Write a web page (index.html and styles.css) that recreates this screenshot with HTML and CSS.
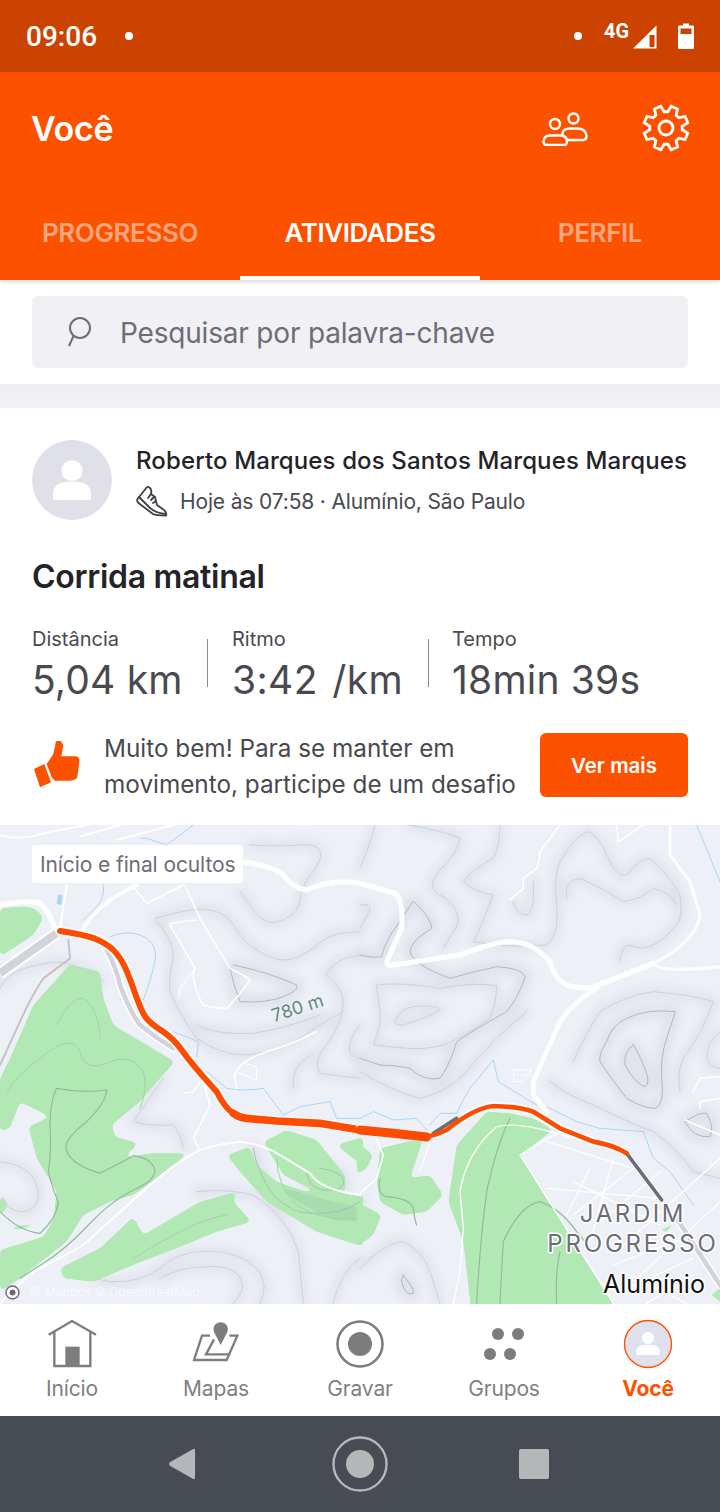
FILE: index.html
```html
<!DOCTYPE html>
<html lang="pt-BR">
<head>
    <meta charset="UTF-8">
    <meta name="viewport" content="width=device-width, initial-scale=1.0">
    <title>Você - Atividades</title>
    <link rel="stylesheet" href="styles.css">
</head>
<body>
    <div class="status-bar">
        <span class="status-time">09:06</span>
        <span class="status-dot status-dot-left"></span>
        <span class="status-dot status-dot-right"></span>
        <span class="status-net">4G</span>
        <svg class="status-signal" width="26" height="26" viewBox="0 0 26 26">
            <path d="M1 24.5 L24.5 1.5 V24.5 Z" fill="#fff"/>
            <path d="M17.5 11 H22.5 V23 H17.5 Z" fill="#cc4200"/>
        </svg>
        <svg class="status-battery" width="16" height="26" viewBox="0 0 16 26">
            <path d="M5 0.5 H11 V2.5 H14.5 Q16 2.5 16 4 V24.5 Q16 26 14.5 26 H1.5 Q0 26 0 24.5 V4 Q0 2.5 1.5 2.5 H5 Z" fill="#fff"/>
            <rect x="2.5" y="5.5" width="11" height="5.5" fill="#cc4200"/>
        </svg>
    </div>

    <header class="app-header">
        <div class="header-top">
            <h1>Você</h1>
            <svg class="icon-friends" width="46" height="34" viewBox="0 0 46 34" fill="none" stroke="#fff" stroke-width="2.4">
                <circle cx="13" cy="12" r="5"/>
                <circle cx="31.5" cy="6.5" r="5"/>
                <path d="M20.5 23 Q20 17 27 16.5 H36 Q44 17 44.5 24 Q44.5 28 41 28 H25"/>
                <path d="M7 23.5 H19 Q25 24 25 29.5 Q25 33 21 33 H5 Q1.5 33 1.5 29.5 Q2 24 7 23.5 Z"/>
            </svg>
            <svg class="icon-gear" width="48" height="48" viewBox="-24 -24 48 48" fill="none" stroke="#fff" stroke-width="2.8" stroke-linejoin="miter">
                <polygon points="16.2,1.8 21.8,5.2 19,11.5 12.8,10.2 10.2,12.8 11.5,19 5.2,21.8 1.8,16.2 -1.8,16.2 -5.2,21.8 -11.5,19 -10.2,12.8 -12.8,10.2 -19,11.5 -21.8,5.2 -16.2,1.8 -16.2,-1.8 -21.8,-5.2 -19,-11.5 -12.8,-10.2 -10.2,-12.8 -11.5,-19 -5.2,-21.8 -1.8,-16.2 1.8,-16.2 5.2,-21.8 11.5,-19 10.2,-12.8 12.8,-10.2 19,-11.5 21.8,-5.2 16.2,-1.8"/>
                <circle r="7"/>
            </svg>
        </div>
        <nav class="tabs">
            <a class="tab">PROGRESSO</a>
            <a class="tab tab-active">ATIVIDADES</a>
            <a class="tab">PERFIL</a>
        </nav>
    </header>

    <div class="search-wrap">
        <div class="search-box">
            <svg class="icon-search" width="28" height="34" viewBox="0 0 28 34" fill="none" stroke="#6d6d78" stroke-width="2">
                <circle cx="15" cy="12" r="10"/>
                <path d="M8.5 20 L4 30"/>
            </svg>
            <span>Pesquisar por palavra-chave</span>
        </div>
    </div>
    <div class="divider"></div>

    <section class="card">
        <div class="athlete">
            <div class="avatar">
                <svg width="80" height="80" viewBox="0 0 80 80" fill="#fff">
                    <circle cx="40" cy="30.7" r="10.5"/>
                    <path d="M21 60 V54 Q21 42.5 36 41.7 H44 Q59 42.5 59 54 V60 Z"/>
                </svg>
            </div>
            <div class="athlete-text">
                <div class="athlete-name">Roberto Marques dos Santos Marques Marques</div>
                <div class="athlete-sub">
                    <svg class="icon-shoe" width="32" height="32" viewBox="0 0 32 32" fill="none" stroke="#3f3f46" stroke-width="1.8" stroke-linejoin="round" stroke-linecap="round">
                        <path d="M11 2 L1.5 14 Q0.5 16 2.5 18 L17 29 Q20 30.5 30 30.5 Q31 27 28 25 L21 20 L19 12 L15 9 Q16 5 14 3 Q12 1.5 11 2 Z"/>
                        <path d="M3 12 L13 22 Q19 28 30 29"/>
                        <path d="M15 9 L12 13 M18 12 L15 15 M20 16 L17 18"/>
                    </svg>
                    <span>Hoje às 07:58 · Alumínio, São Paulo</span>
                </div>
            </div>
        </div>

        <h2 class="activity-title">Corrida matinal</h2>

        <div class="stats">
            <div class="stat stat-distance">
                <div class="stat-label">Distância</div>
                <div class="stat-value">5,04 km</div>
            </div>
            <div class="stat-sep"></div>
            <div class="stat stat-pace">
                <div class="stat-label">Ritmo</div>
                <div class="stat-value">3:42 /km</div>
            </div>
            <div class="stat-sep"></div>
            <div class="stat stat-time">
                <div class="stat-label">Tempo</div>
                <div class="stat-value">18min 39s</div>
            </div>
        </div>

        <div class="prompt">
            <svg class="icon-thumb" width="48" height="52" viewBox="36 45 144 156" fill="#fc5200">
                <path d="M108 52 Q125 46 130 65 L124 97 H168 Q180 99 178 115 L172 160 Q166 170 150 170 H105 L95 160 L80 120 L100 90 Z"/>
                <path d="M42 135 L73 120 L93 175 L60 190 Z"/>
            </svg>
            <p>Muito bem! Para se manter em movimento, participe de um desafio</p>
            <button class="btn-more">Ver mais</button>
        </div>
    </section>

    <div class="map">
        <svg class="map-canvas" width="720" height="479" viewBox="0 0 720 479" fill="none" stroke-linecap="round" stroke-linejoin="round">
            <defs>
                <filter id="map-shade" x="-20%" y="-20%" width="140%" height="140%">
                    <feGaussianBlur stdDeviation="14"/>
                </filter>
                <filter id="map-round" x="-5%" y="-5%" width="110%" height="110%" color-interpolation-filters="sRGB">
                    <feGaussianBlur stdDeviation="8"/>
                    <feComponentTransfer>
                        <feFuncA type="linear" slope="10" intercept="-4.5"/>
                    </feComponentTransfer>
                </filter>
                <g id="contours-light-left">
                    <path d="M465 280 Q530 262 565 256 Q600 250 640 257 Q680 265 705 307 Q730 350 765 372 Q800 395 830 402 Q860 410 895 395 Q930 380 965 350 Q1000 320 1080 320"/>
                    <path d="M750 60 Q850 65 900 60 Q950 55 960 78 Q970 100 935 145 Q900 190 900 225 Q900 260 850 285 Q800 310 760 255 L720 200"/>
                    <path d="M1080 390 Q1000 400 978 450 Q1030 490 1030 530 Q1025 600 980 660 Q935 710 960 745 Q1000 750 1080 760"/>
                    <path d="M470 290 Q520 340 520 400 Q505 460 510 500 Q540 570 590 640 Q660 690 740 690 Q830 680 900 640 Q970 590 1030 560"/>
                    <path d="M590 600 Q640 630 760 625 Q860 610 960 570"/>
                    <path d="M0 490 Q20 450 60 435 Q130 410 190 412 Q260 430 310 470"/>
                    <path d="M490 760 Q440 830 400 890 Q450 905 520 900 Q545 930 550 970"/>
                    <path d="M880 790 Q870 730 930 690"/>
                    <path d="M1080 600 Q1040 650 1050 680 Q1060 700 1080 700"/>
                    <path d="M250 1310 Q270 1365 330 1370 Q420 1375 480 1330 Q530 1280 620 1278 Q720 1280 770 1330 Q810 1380 780 1435"/>
                    <path d="M480 1360 Q540 1325 620 1325 Q710 1320 725 1370 Q735 1400 700 1435"/>
                    <path d="M590 1100 Q680 1090 760 1110 Q860 1170 895 1280 L910 1435"/>
                    <path d="M1080 1300 Q1020 1340 1000 1435"/>
                    <path d="M0 1010 Q90 1020 110 1080 Q130 1150 70 1160 Q40 1160 20 1140"/>
                </g>
                <g id="contours-dark-left">
                    <path d="M690 430 Q700 480 720 530 Q800 535 850 515 Q900 495 890 480 Q800 440 700 420"/>
                    <path d="M760 970 Q770 1040 820 1110 Q880 1170 940 1165 Q1020 1170 1080 1130"/>
                    <path d="M920 1040 Q925 1090 970 1095 Q1030 1100 1032 1070 Q1032 1040 960 1030"/>
                </g>
                <g id="contours-light-right">
                    <path d="M50 480 Q120 470 240 490 Q340 470 410 482 Q410 530 390 580 Q320 630 250 660 Q190 675 140 670 L40 660 Q65 600 60 560 Z"/>
                    <path d="M105 590 Q120 550 160 545 Q240 540 240 555 Q200 580 130 600 Q105 600 105 590 Z"/>
                    <path d="M0 240 Q35 235 30 255 L0 310"/>
                    <path d="M145 0 Q260 20 300 40 Q290 90 240 135 Q190 190 250 215 Q320 270 280 320 L250 370"/>
                    <path d="M420 0 Q420 60 400 100 Q340 130 310 170 Q340 200 400 210 Q370 290 340 350 Q450 370 560 360 Q600 330 590 240 Q580 150 600 110 Q640 40 680 20 Q710 20 740 90 Q770 160 800 150 Q840 100 870 100 Q930 150 960 210 Q970 280 950 300 Q900 360 850 370 L800 360 Q780 380 780 410"/>
                    <path d="M620 220 Q610 165 660 160 Q730 190 790 230 Q850 220 880 190 Q930 200 950 240"/>
                    <path d="M640 710 Q680 620 720 560 Q800 510 880 500 Q1000 510 1060 530 Q1030 620 970 700 Q950 740 960 800"/>
                    <path d="M570 770 Q620 810 700 840 Q800 890 880 920 Q950 970 1000 1040 L1080 1060"/>
                    <path d="M1080 620 Q1040 650 1040 700 Q1050 730 1080 730"/>
                    <path d="M0 1330 Q80 1250 130 1250 Q190 1280 210 1340 L240 1435"/>
                    <path d="M0 740 Q100 800 180 820 Q260 800 310 750 Q400 640 500 560"/>
                    <path d="M460 230 Q470 270 500 270 Q525 260 520 170"/>
                    <path d="M45 0 Q30 60 0 130"/>
                </g>
                <g id="contours-dark-right">
                    <path d="M0 390 Q40 400 65 395 Q75 350 105 310 L160 228 Q215 280 215 310 Q150 350 150 380 Q160 420 270 460 Q340 440 410 425 Q490 430 495 455 Q480 510 440 560 Q350 610 290 650 Q270 720 240 760 Q190 770 150 730 Q100 720 60 720 L0 700"/>
                    <path d="M945 560 Q860 550 800 580 Q755 600 740 650 Q715 690 720 710 Q760 770 800 820 Q850 850 885 850 Q915 840 905 760 Q900 700 920 640 Z"/>
                    <path d="M820 660 Q790 680 795 720 Q825 775 855 785 Q870 775 860 745 Q840 690 820 660 Z"/>
                    <path d="M130 1350 Q165 1395 160 1405 Q135 1415 125 1370 Z"/>
                    <path d="M975 890 Q1020 860 1040 865 Q1065 910 1050 935 Q1000 940 975 890 Z"/>
                </g>
            </defs>

            <rect width="720" height="479" fill="#eef0f8"/>
            <g class="map-soft">
                <!-- left half, drawn in 3x crop coords -->
                <g transform="scale(.33333)">
                    <g filter="url(#map-shade)" stroke="#d8dae4" opacity=".65">
                        <use href="#contours-light-left" stroke-width="26"/>
                        <use href="#contours-dark-left" stroke-width="40"/>
                    </g>
                    <g filter="url(#map-round)" fill="#b2e8b4">
                        <path d="M0 250 L60 245 Q110 240 130 280 L100 330 Q40 370 0 395 Z"/>
                        <path d="M210 418 L300 440 L310 520 L340 600 L525 710 L480 760 L420 830 L335 900 L345 935 L415 955 L370 1000 L450 985 L565 985 L470 1060 L400 1110 L330 1130 L250 1170 L200 1250 L60 1360 L0 1400 V1275 L130 1235 L160 1185 L60 1215 L0 1210 V1100 L25 1140 L0 1180 V1210 L160 1185 L170 1100 L110 1000 L85 905 L150 875 L60 830 L30 910 L0 920 V760 L30 700 L100 540 Z"/>
                        <path d="M180 1330 L300 1270 L400 1175 L430 1230 L600 1130 L710 1100 L700 1130 L755 1190 L650 1220 L530 1270 L400 1320 L280 1370 L190 1360 Z"/>
                        <path d="M680 990 L750 965 L770 1020 L830 1070 L920 1100 L1090 1110 V1265 L950 1220 L800 1130 L720 1040 Z"/>
                        <path d="M790 950 L860 915 L950 945 L1035 1050 L1035 1100 L950 1100 L850 1050 Z"/>
                        <path d="M1010 960 L1090 935 V1025 Z"/>
                    </g>
                    <path d="M830 1085 Q900 1100 1000 1130 L1090 1150 V1190 L1000 1185 Q900 1140 830 1085 Z" fill="#a8dcae" filter="url(#map-round)"/>

                    <use href="#contours-light-left" stroke="#c8d4d4" stroke-width="3"/>
                    <use href="#contours-dark-left" stroke="#a3bfb4" stroke-width="3"/>
                    <g stroke="#8fbb99" stroke-width="3.5">
                        <path d="M170 790 Q250 805 320 795 Q320 830 260 890 Q195 940 198 970 Q205 1015 300 1045 Q350 1020 400 992 Q460 1000 465 1040 Q460 1070 400 1095 Q330 1130 265 1200 Q200 1270 130 1315 L60 1360"/>
                        <path d="M170 790 Q150 830 150 900 Q155 980 145 1040 Q160 1100 175 1130 Q170 1180 120 1225 Q60 1220 0 1160"/>
                    </g>
                    <g stroke="#9fd3a6" stroke-width="3">
                        <path d="M20 800 Q60 740 120 700 Q220 620 240 680 Q250 740 320 715 Q390 680 430 740 Q445 790 420 850"/>
                        <path d="M170 600 Q220 500 260 525 Q300 570 300 640"/>
                        <path d="M830 1000 Q830 1080 890 1140 Q960 1190 1080 1180"/>
                        <path d="M400 1300 Q480 1250 560 1210 Q620 1180 680 1170"/>
                    </g>

                    <g stroke="#a9d5f0" stroke-width="3">
                        <path d="M310 180 Q315 225 285 250 L250 285"/>
                        <path d="M330 335 Q380 315 420 330 Q465 345 467 390 Q465 430 430 525"/>
                        <path d="M520 620 L595 650 L590 695"/>
                        <path d="M620 740 L680 790 Q740 800 790 790 L850 870 Q870 860 900 845 L990 830 L1010 880 L1080 880"/>
                        <path d="M420 40 L440 40 L500 60 L540 30 L580 0"/>
                    </g>
                    <path d="M175 208 L188 212 L184 240 L170 236 Z" fill="#a9d5f0"/>
                    <path d="M205 345 L210 400 L130 460 Q90 520 60 590 L0 720" stroke="#c9c2c2" stroke-width="6"/>

                    <g stroke="#fff">
                        <path d="M0 240 Q60 225 120 235 Q145 255 165 310" stroke-width="15"/>
                        <path d="M250 310 Q300 230 410 180" stroke-width="12"/>
                        <path d="M730 110 Q820 125 850 150 Q880 190 920 195 Q1000 160 1080 175" stroke-width="15"/>
                        <path d="M0 30 Q60 50 150 20 L260 0" stroke-width="6"/>
                        <path d="M240 35 L360 0" stroke-width="6"/>
                        <path d="M350 45 L520 0" stroke-width="6"/>
                        <path d="M180 310 L200 180" stroke-width="6"/>
                        <path d="M400 185 L440 235 L550 180" stroke-width="5"/>
                        <path d="M555 180 Q580 240 600 280 L690 430 Q740 455 750 465 Q720 510 680 550 Q640 550 610 540 Q590 510 585 480 Q575 450 585 430 Q545 360 510 300 Q500 295 590 285" stroke-width="5"/>
                        <path d="M535 520 L540 490 L585 430" stroke-width="3"/>
                        <path d="M950 620 Q870 660 800 680 Q745 700 730 715 Q700 740 705 760 L710 790" stroke-width="5"/>
                        <path d="M730 715 L770 725 L770 765 L710 740" stroke-width="3"/>
                        <path d="M610 770 L630 840 L580 940 L600 975" stroke-width="5"/>
                        <path d="M550 805 L580 800 L600 770" stroke-width="4"/>
                        <path d="M0 1435 Q50 1380 100 1340 Q180 1300 250 1260 Q300 1215 350 1170 Q400 1125 450 1080 Q530 1010 600 975 Q660 955 720 950 Q780 955 840 990 L930 1045 Q960 1095 1080 1110" stroke-width="6"/>
                    </g>
                    <path d="M0 445 L170 325" stroke="#fff" stroke-width="36" stroke-linecap="butt"/>
                    <path d="M0 445 L170 325" stroke="#d3d4db" stroke-width="24" stroke-linecap="butt"/>
                    <path d="M320 375 Q350 430 360 480 Q390 560 420 600 Q470 640 520 670" stroke="#fff" stroke-width="24"/>
                    <path d="M320 375 Q350 430 360 480 Q390 560 420 600 Q470 640 520 670" stroke="#d3d4db" stroke-width="14"/>
                    <path d="M180 318 Q250 328 285 341 Q320 355 340 375 Q360 395 375 427 Q390 460 407 510 Q425 560 437 577 Q450 595 485 617 Q520 640 545 675 Q570 710 610 755 L650 800 Q675 850 700 865 Q718 878 740 880 L830 888 L960 895 L1080 915" stroke="#fff" stroke-width="28"/>
                    <path d="M180 318 Q250 328 285 341 Q320 355 340 375 Q360 395 375 427 Q390 460 407 510 Q425 560 437 577 Q450 595 485 617 Q520 640 545 675 Q570 710 610 755 L650 800 Q675 850 700 865" stroke="#fc4c02" stroke-width="18"/>
                    <path d="M700 865 Q718 878 740 880 L830 888 L960 895 L1080 915" stroke="#fc4c02" stroke-width="23"/>
                </g>

                <!-- right half -->
                <g transform="translate(360 0) scale(.33333)">
                    <g filter="url(#map-shade)" stroke="#d8dae4" opacity=".65">
                        <use href="#contours-light-right" stroke-width="26"/>
                        <use href="#contours-dark-right" stroke-width="40"/>
                    </g>
                    <g filter="url(#map-round)" fill="#b2e8b4">
                        <path d="M-10 950 L40 990 L20 1030 L-10 1050 Z"/>
                        <path d="M60 970 L190 940 L150 1060 L210 1050 L250 1110 L200 1160 L130 1170 L60 1130 L50 1070 Z"/>
                        <path d="M-10 1130 L65 1170 L40 1230 L-10 1265 Z"/>
                        <path d="M380 860 L450 865 L520 880 L580 915 L480 990 L780 1470 H335 L310 1250 L265 1130 L290 960 Z"/>
                    </g>
                    <path d="M905 1215 L935 1200 L920 1220 Z" fill="#b2e8b4"/>
                    <path d="M1055 1410 L1080 1390 V1430 Z" fill="#b2e8b4"/>

                    <use href="#contours-light-right" stroke="#c8d4d4" stroke-width="3"/>
                    <use href="#contours-dark-right" stroke="#a3bfb4" stroke-width="3"/>
                    <g stroke="#8fbb99" stroke-width="3.5">
                        <path d="M420 1435 Q425 1330 430 1250 Q480 1140 540 1130 Q600 1150 650 1220 L700 1280"/>
                        <path d="M350 1435 Q360 1250 380 1100 Q410 960 450 880"/>
                        <path d="M590 1435 Q585 1340 600 1280"/>
                        <path d="M60 1060 Q50 1110 80 1115 Q150 1120 160 1150 Q165 1190 170 1200"/>
                    </g>

                    <g stroke="#a9d5f0" stroke-width="3">
                        <path d="M200 915 L170 880 L100 885 L40 860 L0 880"/>
                        <path d="M210 900 L240 865 L290 865 Q310 820 330 790 L400 705 L415 770 L530 840"/>
                        <path d="M560 845 L650 890 L720 910 L850 920 L880 1000 L930 1040 L1000 1140"/>
                        <path d="M1010 0 L1080 170"/>
                    </g>

                    <g stroke="#fff">
                        <path d="M0 175 L105 205 Q130 225 125 310 L80 410 Q80 425 100 420 L300 390 Q400 350 450 350 Q520 350 570 410 Q590 480 640 485 L690 490 L880 415" stroke-width="15"/>
                        <path d="M880 415 Q1010 350 1020 270 L990 170 L930 90 L930 0" stroke-width="9"/>
                        <path d="M880 415 Q900 445 1080 425" stroke-width="10"/>
                        <path d="M710 490 Q640 530 600 590 L520 770 L520 810 L560 860" stroke-width="14"/>
                        <path d="M770 0 L775 50 L850 0" stroke-width="5"/>
                        <path d="M450 225 L490 190 L490 160 L530 130 Q540 100 540 80 L600 0" stroke-width="5"/>
                        <path d="M1000 800 L1020 760 L1080 755" stroke-width="5"/>
                        <path d="M1020 850 L1020 830 L1080 820" stroke-width="5"/>
                        <path d="M975 885 L1080 930" stroke-width="5"/>
                        <path d="M460 735 L515 735 L490 770 L465 770 Z M470 750 L505 750" stroke-width="3"/>
                        <path d="M0 1105 L50 1060 L70 990 L50 945" stroke-width="5"/>
                        <path d="M210 950 L180 1040" stroke-width="4"/>
                        <path d="M590 925 Q470 890 410 905 Q320 980 300 1100 L310 1210 L300 1340 L280 1435" stroke-width="4"/>
                        <g stroke-width="4">
                            <path d="M480 990 L590 925 L800 985"/>
                            <path d="M480 990 L760 1435"/>
                            <path d="M620 1170 L690 1030"/>
                            <path d="M690 1250 L760 1000"/>
                            <path d="M560 950 L820 1030 L640 1170"/>
                            <path d="M720 1190 L900 1040"/>
                            <path d="M770 1280 L1080 1000"/>
                            <path d="M820 1370 L1080 1130"/>
                            <path d="M760 1320 L1000 1230"/>
                            <path d="M560 1090 L900 1120"/>
                            <path d="M640 1070 L900 1200"/>
                            <path d="M790 1340 L980 1435"/>
                            <path d="M800 1390 L1000 1300"/>
                            <path d="M860 1435 L1000 1350"/>
                        </g>
                    </g>
                    <path d="M950 1180 L1080 1380" stroke="#fff" stroke-width="22"/>
                    <path d="M950 1180 L1080 1380" stroke="#d3d4db" stroke-width="14"/>
                    <path d="M0 910 L100 925 Q180 940 205 935 Q230 930 260 915 Q340 850 400 843 Q480 845 520 860 L600 910 L700 950 Q760 960 800 985" stroke="#fff" stroke-width="24"/>
                    <path d="M800 985 L905 1125" stroke="#fff" stroke-width="16"/>
                    <path d="M800 985 L905 1125" stroke="#6d6d78" stroke-width="11"/>
                    <path d="M220 925 L290 880" stroke="#6d6d78" stroke-width="11"/>
                    <path d="M0 915 L100 925 L200 936" stroke="#fc4c02" stroke-width="27"/>
                    <path d="M200 936 Q230 930 260 915 Q340 850 400 843 Q480 845 520 860 L600 910 L700 950 Q760 960 800 985" stroke="#fc4c02" stroke-width="14"/>
                </g>
            </g>

            <text class="map-contour-label" transform="translate(274 197) rotate(-18)">780 m</text>
            <text class="map-place map-place-top" x="633" y="397" text-anchor="middle">JARDIM</text>
            <text class="map-place" x="633" y="427" text-anchor="middle">PROGRESSO</text>
            <text class="map-city" x="654" y="468" text-anchor="middle">Alumínio</text>
            <text class="map-attrib" x="30" y="471">© Mapbox © OpenStreetMap</text>
            <circle cx="12.5" cy="467.5" r="6.5" fill="#fff" stroke="#6d6d78" stroke-width="1.4"/>
            <circle cx="12.5" cy="467.5" r="3" fill="#6d6d78"/>
        </svg>
        <div class="map-note">Início e final ocultos</div>
    </div>

    <nav class="bottom-nav">
        <a class="nav-item">
            <svg width="56" height="56" viewBox="41 21 168 168">
                <path d="M55 74 L125 33 L197 74" fill="none" stroke="#7d7d80" stroke-width="7"/>
                <path d="M72 62 V168 H180 V62" fill="none" stroke="#7d7d80" stroke-width="7"/>
                <rect x="105" y="110" width="43" height="58" fill="#7d7d80"/>
            </svg>
            <span>Início</span>
        </a>
        <a class="nav-item">
            <svg width="56" height="56" viewBox="474 21 168 168">
                <path d="M540 77 H516 L492 150 H590 L622 77 H598" fill="none" stroke="#7d7d80" stroke-width="7"/>
                <path d="M552 88 L528 133 H600" fill="none" stroke="#7d7d80" stroke-width="7"/>
                <path d="M572 105 L552 66 A21.5 21.5 0 1 1 592 66 Z" fill="#7d7d80"/>
            </svg>
            <span>Mapas</span>
        </a>
        <a class="nav-item">
            <svg width="56" height="56" viewBox="-28 -27 56 56">
                <circle r="22.5" fill="none" stroke="#7d7d80" stroke-width="2.6"/>
                <circle r="12" fill="#7d7d80"/>
            </svg>
            <span>Gravar</span>
        </a>
        <a class="nav-item">
            <svg width="56" height="56" viewBox="-28 -28 56 56" fill="#7d7d80">
                <circle cx="-6" cy="-11" r="6"/>
                <circle cx="14" cy="-11" r="6"/>
                <circle cx="-14" cy="9" r="6"/>
                <circle cx="6" cy="9" r="6"/>
            </svg>
            <span>Grupos</span>
        </a>
        <a class="nav-item nav-item-active">
            <svg width="56" height="56" viewBox="-28 -27 56 56">
                <circle r="23.5" fill="#e0e1ef" stroke="#fc5200" stroke-width="1.4"/>
                <circle cy="-6" r="6" fill="#fff"/>
                <path d="M-11.5 11 V7 Q-11.5 1 -3 1 H3 Q11.5 1 11.5 7 V11 Z" fill="#fff"/>
            </svg>
            <span>Você</span>
        </a>
    </nav>

    <div class="system-nav">
        <svg class="sys-back" width="28" height="32" viewBox="0 0 30 34" fill="#b3b7b7">
            <path d="M27 1 Q29 0 29 3 V31 Q29 34 27 33 L2 19 Q0 17 2 15 Z"/>
        </svg>
        <svg class="sys-home" width="56" height="56" viewBox="-28 -28 56 56">
            <circle r="26.5" fill="none" stroke="#b3b7b7" stroke-width="2.4"/>
            <circle r="14" fill="#b3b7b7"/>
        </svg>
        <svg class="sys-recent" width="30" height="30" viewBox="0 0 30 30" fill="#b3b7b7">
            <rect width="30" height="30" rx="2"/>
        </svg>
    </div>
</body>
</html>
```

FILE: styles.css
```css
* {
    box-sizing: border-box;
}
body {
    font-family: 'Inter', 'Liberation Sans', sans-serif;
    margin: 0;
    padding: 0;
    width: 720px;
    height: 1512px;
    overflow: hidden;
    background: #fff;
    color: #242428;
}

/* status bar */
.status-bar {
    height: 72px;
    background: #cc4200;
    color: #fff;
    display: flex;
    align-items: center;
    padding-left: 26px;
}
.status-time {
    font-family: 'Roboto', sans-serif;
    font-size: 28px;
    font-weight: 500;
}
.status-dot {
    width: 8px;
    height: 8px;
    border-radius: 50%;
    background: #fff;
}
.status-dot-left {
    margin-left: 28px;
}
.status-dot-right {
    margin-left: 441px;
}
.status-net {
    font-family: 'Roboto', sans-serif;
    font-size: 20px;
    font-weight: 700;
    margin-left: 22px;
    margin-top: -10px;
}
.status-signal {
    margin-left: 3px;
    margin-top: 1px;
}
.status-battery {
    margin-left: 20px;
    margin-top: -1px;
}

/* orange header */
.app-header {
    height: 208px;
    background: #fc5200;
    color: #fff;
    position: relative;
    box-shadow: 0 2px 4px rgba(0, 0, 0, 0.15);
}
.header-top {
    height: 136px;
    display: flex;
    align-items: center;
    padding: 0 32px;
    padding-bottom: 24px;
}
.header-top h1 {
    margin: 0 0 0 -1px;
    font-size: 34px;
    font-weight: 600;
    letter-spacing: -0.3px;
    flex: 1;
}
.icon-friends {
    margin-right: 54px;
    margin-top: 1px;
}
.icon-gear {
    margin-right: -2px;
    margin-top: -1px;
}
.tabs {
    height: 72px;
    display: grid;
    grid-template-columns: repeat(3, 1fr);
}
.tab {
    display: flex;
    align-items: center;
    justify-content: center;
    height: 72px;
    padding-bottom: 23px;
    font-size: 26px;
    font-weight: 600;
    color: #ffa67f;
    letter-spacing: -0.4px;
}
.tab-active {
    color: #fff;
    border-bottom: 4px solid #fff;
    padding-bottom: 19px;
}

/* search */
.search-wrap {
    height: 104px;
    padding: 16px 32px;
    background: #fff;
}
.search-box {
    height: 72px;
    background: #f0f0f5;
    border-radius: 6px;
    display: flex;
    align-items: center;
    padding-left: 33px;
    font-size: 28px;
    letter-spacing: -0.19px;
    color: #6d6d78;
}
.search-box span {
    margin-top: 2px;
}
.icon-search {
    margin-right: 27px;
    margin-top: 1px;
}
.divider {
    height: 24px;
    background: linear-gradient(#eeeef2, #f3f3f7);
}

/* activity card */
.card {
    height: 417px;
    padding: 32px 32px 0;
    background: #fff;
}
.athlete {
    display: flex;
    gap: 24px;
}
.avatar {
    width: 80px;
    height: 80px;
    border-radius: 50%;
    background: #dfe0e8;
    flex: none;
}
.avatar svg {
    display: block;
}
.athlete-text {
    padding-top: 6px;
}
.athlete-name {
    font-size: 24px;
    font-weight: 500;
    line-height: 30px;
    letter-spacing: 0.12px;
    white-space: nowrap;
}
.athlete-sub {
    display: flex;
    align-items: center;
    gap: 12px;
    margin-top: 10px;
    height: 30px;
    font-size: 21px;
    letter-spacing: -0.15px;
    color: #494950;
}
.activity-title {
    margin: 37px 0 0;
    font-size: 32px;
    font-weight: 600;
    line-height: 40px;
    letter-spacing: -0.3px;
}
.stats {
    display: flex;
    gap: 25px;
    margin-top: 29px;
}
.stat-distance {
    width: 150px;
}
.stat-pace {
    width: 171px;
    margin-left: -1px;
}
.stat-pace .stat-value {
    word-spacing: 3px;
    letter-spacing: 0.4px;
}
.stat-time {
    margin-left: -2px;
}
.stat-label {
    font-size: 20px;
    line-height: 26px;
    color: #494950;
}
.stat-value {
    font-size: 39px;
    line-height: 46px;
    letter-spacing: 0.2px;
    margin-top: 5px;
    color: #494950;
    white-space: nowrap;
}
.stat-sep {
    width: 1px;
    height: 48px;
    margin-top: 13px;
    background: #8a8a92;
}
.prompt {
    display: flex;
    align-items: center;
    margin-top: 30px;
    height: 64px;
}
.icon-thumb {
    flex: none;
    margin-right: 24px;
}
.prompt p {
    margin: 2px 0 0;
    width: 436px;
    font-size: 24.3px;
    line-height: 36px;
    color: #494950;
}
.btn-more {
    flex: none;
    width: 148px;
    height: 64px;
    border: 0;
    border-radius: 6px;
    background: #fc5200;
    color: #fff;
    font-family: inherit;
    font-size: 20.5px;
    font-weight: 600;
}

/* map */
.map {
    height: 479px;
    position: relative;
    overflow: hidden;
}
.map-canvas {
    display: block;
}
.map-soft {
    filter: blur(0.35px);
}
.map-note {
    position: absolute;
    left: 32px;
    top: 20px;
    height: 38px;
    line-height: 39px;
    padding: 0 8px;
    background: #fff;
    border-radius: 3px;
    font-size: 21px;
    letter-spacing: -0.1px;
    color: #6d6d78;
}
.map-contour-label {
    font-size: 18px;
    fill: #5f8a7a;
}
.map-place {
    font-size: 24px;
    letter-spacing: 2.8px;
    fill: #6d6d78;
    stroke: #fff;
    stroke-width: 3px;
    paint-order: stroke;
}
.map-place-top {
    letter-spacing: 2.6px;
}
.map-city {
    font-size: 25px;
    fill: #111;
    stroke: #fff;
    stroke-width: 3px;
    paint-order: stroke;
}
.map-attrib {
    font-size: 12.2px;
    fill: rgba(255, 255, 255, 0.65);
}

/* bottom nav */
.bottom-nav {
    height: 112px;
    display: grid;
    grid-template-columns: repeat(5, 144px);
    background: #fff;
}
.nav-item {
    display: flex;
    flex-direction: column;
    align-items: center;
    padding-top: 13px;
    font-size: 21px;
    line-height: 26px;
    letter-spacing: -0.15px;
    color: #808083;
}
.nav-item span {
    margin-top: 3px;
}
.nav-item-active {
    color: #fc5200;
    font-weight: 700;
}

/* android nav */
.system-nav {
    height: 96px;
    background: #474c52;
    display: flex;
    align-items: center;
    padding-left: 168px;
}
.sys-home {
    margin: 0 131px 0 136px;
}
```
